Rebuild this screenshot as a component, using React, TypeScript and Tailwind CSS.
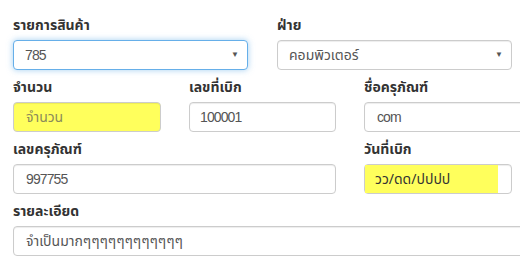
const font = { fontFamily: '"Noto Sans Thai", "Noto Sans", sans-serif' };

function Label({ children }: { children: React.ReactNode }) {
  return <label className="block h-[20px] leading-[20px] mb-[4px] text-[14px] font-bold text-[#333] whitespace-nowrap">{children}</label>;
}

// latin values in the reference use a narrow face
function Num({ children }: { children: React.ReactNode }) {
  return <span className="font-['Liberation_Sans',sans-serif] tracking-[-0.9px] text-[14px] text-[#555]">{children}</span>;
}

function Select({ children, focused, width }: { children: React.ReactNode; focused?: boolean; width: string }) {
  return (
    <div
      className={`relative flex items-center h-[30px] pl-[11px] pr-[8px] rounded-[4px] border bg-white text-[14px] text-[#555] ${width} ${
        focused ? "border-[#66afe9] shadow-[0_0_6px_rgba(102,175,233,0.6)]" : "border-[#ccc] shadow-[inset_0_1px_1px_rgba(0,0,0,0.075)]"
      }`}
    >
      <span className="flex-1">{children}</span>
      <span className="text-[8px] text-[#555]">▼</span>
    </div>
  );
}

function Input({ children, width, yellow, pad = "pl-[12px]" }: { children: React.ReactNode; width: string; yellow?: boolean; pad?: string }) {
  return (
    <div
      className={`flex items-center h-[30px] ${pad} rounded-[4px] border border-[#ccc] shadow-[inset_0_1px_1px_rgba(0,0,0,0.075)] text-[14px] text-[#555] whitespace-nowrap overflow-hidden ${width} ${
        yellow ? "bg-[#ffff5c]" : "bg-white"
      }`}
    >
      {children}
    </div>
  );
}

export default function App() {
  return (
    <div className="w-[520px] h-[259px] overflow-hidden bg-white pt-[16px] pl-[13px]" style={font}>
      <div className="flex gap-[29px] w-[600px]">
        <div>
          <Label>รายการสินค้า</Label>
          <Select focused width="w-[235px]">
            <Num>785</Num>
          </Select>
        </div>
        <div>
          <Label>ฝ่าย</Label>
          <Select width="w-[235px]">คอมพิวเตอร์</Select>
        </div>
      </div>

      <div className="flex gap-[28px] mt-[8px] w-[600px]">
        <div>
          <Label>จำนวน</Label>
          <Input yellow width="w-[148px]">
            <span className="text-[#8a8a5a]">จำนวน</span>
          </Input>
        </div>
        <div>
          <Label>เลขที่เบิก</Label>
          <Input width="w-[147px]" pad="pl-[10px]">
            <Num>100001</Num>
          </Input>
        </div>
        <div>
          <Label>ชื่อครุภัณฑ์</Label>
          <Input width="w-[170px]">
            <Num>com</Num>
          </Input>
        </div>
      </div>

      <div className="flex gap-[28px] mt-[8px] w-[600px]">
        <div>
          <Label>เลขครุภัณฑ์</Label>
          <Input width="w-[323px]">
            <Num>997755</Num>
          </Input>
        </div>
        <div>
          <Label>วันที่เบิก</Label>
          <div className="flex items-center h-[30px] rounded-[4px] border border-[#ccc] bg-white w-[148px] shadow-[inset_0_1px_1px_rgba(0,0,0,0.075)]">
            <span className="flex items-center h-full w-[133px] pl-[10px] bg-[#ffff5c] text-[14px] text-[#333]">วว/ดด/ปปปป</span>
          </div>
        </div>
      </div>

      <div className="mt-[8px] w-[600px]">
        <Label>รายละเอียด</Label>
        <Input width="w-[540px]">จำเป็นมากๆๆๆๆๆๆๆๆๆๆๆๆ</Input>
      </div>
    </div>
  );
}
